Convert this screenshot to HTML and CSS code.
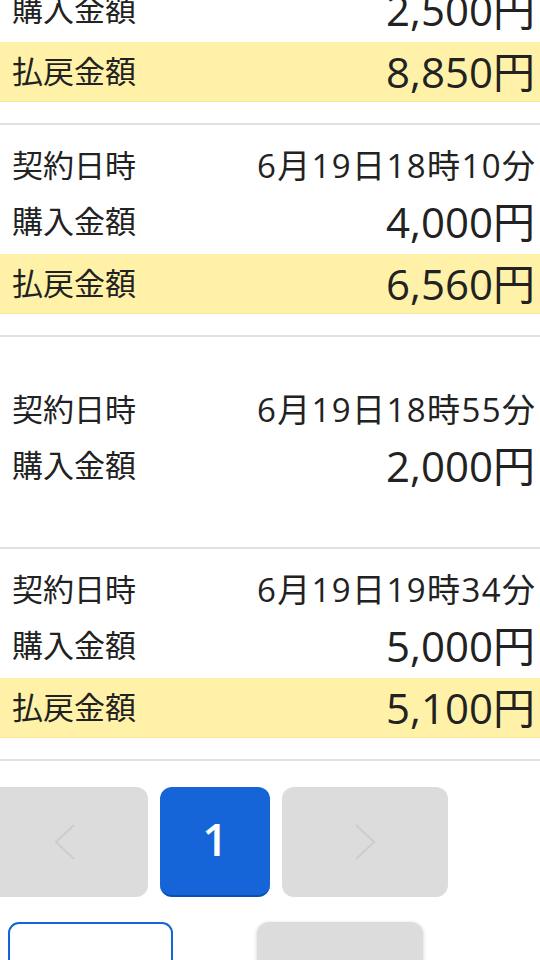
FILE: index.html
```html
<!DOCTYPE html>
<html lang="ja">
<head>
<meta charset="utf-8">
<link rel="stylesheet" href="styles.css">
</head>
<body>
<div class="list">
  <div class="card">
    <div class="row"><span class="label">契約日時</span><span class="date">6月19日17時42分</span></div>
    <div class="row"><span class="label">購入金額</span><span class="amt">2,500円</span></div>
    <div class="row pay"><span class="label">払戻金額</span><span class="amt">8,850円</span></div>
  </div>
  <div class="card">
    <div class="row"><span class="label">契約日時</span><span class="date">6月19日18時10分</span></div>
    <div class="row"><span class="label">購入金額</span><span class="amt">4,000円</span></div>
    <div class="row pay"><span class="label">払戻金額</span><span class="amt">6,560円</span></div>
  </div>
  <div class="card">
    <div class="row"><span class="label">契約日時</span><span class="date">6月19日18時55分</span></div>
    <div class="row"><span class="label">購入金額</span><span class="amt">2,000円</span></div>
  </div>
  <div class="card">
    <div class="row"><span class="label">契約日時</span><span class="date">6月19日19時34分</span></div>
    <div class="row"><span class="label">購入金額</span><span class="amt">5,000円</span></div>
    <div class="row pay"><span class="label">払戻金額</span><span class="amt">5,100円</span></div>
  </div>
</div>
<div class="pager">
  <div class="pbtn nav">
    <svg width="24" height="38" viewBox="0 0 24 38"><path d="M21 2 L3 19 L21 36" fill="none" stroke="#cdcdcd" stroke-width="2.2"/></svg>
  </div>
  <div class="pbtn current">1</div>
  <div class="pbtn nav">
    <svg width="24" height="38" viewBox="0 0 24 38"><path d="M3 2 L21 19 L3 36" fill="none" stroke="#cdcdcd" stroke-width="2.2"/></svg>
  </div>
</div>
<div class="actions">
  <div class="abtn outline"></div>
  <div class="abtn grey"></div>
</div>
</body>
</html>
```

FILE: styles.css
```css
html, body {
  margin: 0;
  padding: 0;
  width: 540px;
  height: 960px;
  overflow: hidden;
  background: #ffffff;
  font-family: "Open Sans", "Noto Sans CJK JP", sans-serif;
  color: #222222;
}

.list {
  margin-top: -87px;
}

.card {
  display: flex;
  flex-direction: column;
  justify-content: center;
  height: 176px;
  padding: 13px 0 21px;
  border-bottom: 2px solid #e1e1e1;
}

.row {
  flex-shrink: 0;
  display: flex;
  justify-content: space-between;
  align-items: center;
  height: 56px;
  padding: 0 5px 0 12px;
}

.row.pay {
  height: 60px;
  margin-top: 4px;
  background: #fff2a8;
  box-shadow: inset 0 -1px 0 #f6e79a;
}

.label {
  font-size: 31px;
  line-height: 1;
  margin-top: -2px;
}

.date {
  font-size: 33px;
  line-height: 1;
  letter-spacing: 1.4px;
  margin-right: -1.4px;
  margin-top: -2px;
}

.amt {
  font-size: 42px;
  line-height: 1;
}

.pager {
  display: flex;
  gap: 12px;
  margin: 26px 0 0 -18px;
}

.pbtn {
  height: 110px;
  border-radius: 12px;
  display: flex;
  align-items: center;
  justify-content: center;
  box-sizing: border-box;
}

.pbtn.nav {
  width: 166px;
  background: #dcdcdc;
}

.pbtn.current {
  width: 110px;
  padding-bottom: 6px;
  background: #1565d8;
  border-bottom: 2px solid #0c4fb4;
  color: #ffffff;
  font-size: 45px;
  font-weight: 600;
  line-height: 1;
}

.actions {
  display: flex;
  gap: 84px;
  margin-top: 25px;
  padding-left: 8px;
}

.abtn {
  height: 80px;
  box-sizing: border-box;
}

.abtn.outline {
  width: 165px;
  border: 2px solid #1565d8;
  border-radius: 11px;
  background: #ffffff;
}

.abtn.grey {
  width: 166px;
  border-radius: 12px;
  background: #dcdcdc;
  box-shadow: 0 1px 4px rgba(0, 0, 0, 0.18);
}
```
